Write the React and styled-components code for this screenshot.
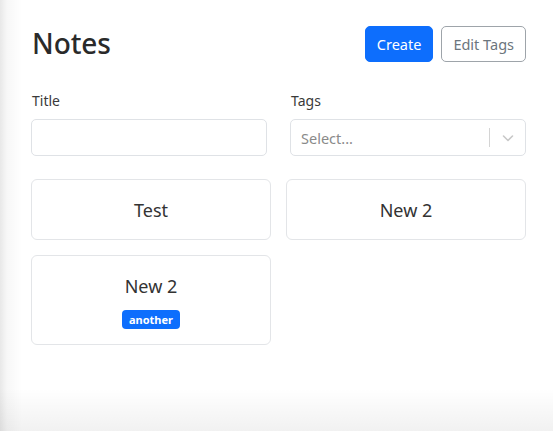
import React from "react";
import styled, { createGlobalStyle } from "styled-components";

const Global = createGlobalStyle`
  html, body { margin: 0; padding: 0; }
  body {
    font-family: "Noto Sans", "Open Sans", Arial, sans-serif;
    color: #212529;
    background: #fff;
  }
  * { box-sizing: border-box; }
`;

const Frame = styled.div`
  height: 100vh;
  overflow: hidden;
  background:
    linear-gradient(to bottom, rgba(0,0,0,0) 388px, rgba(0,0,0,0.055) 431px),
    linear-gradient(to right, rgba(0,0,0,0.09) 0, rgba(0,0,0,0.03) 7px, rgba(0,0,0,0) 22px),
    #fff;
`;

const Container = styled.div`
  width: 495px;
  margin-left: 31px;
  padding-top: 26px;
`;

const Header = styled.div`
  display: flex;
  align-items: center;
  justify-content: space-between;
  height: 36px;
`;

const Heading = styled.h1`
  margin: 0 0 2px;
  font-size: 28px;
  font-weight: 500;
  letter-spacing: -0.1px;
  line-height: 1;
  color: #2a2a2a;
  padding-left: 1px;
`;

const Actions = styled.div`
  display: flex;
  gap: 8px;
`;

const Button = styled.button`
  height: 36px;
  padding: 0 11px;
  border-radius: 5px;
  font-family: inherit;
  font-size: 14.5px;
  cursor: pointer;
  border: 1px solid ${(p) => (p.$primary ? "#0d6efd" : "#9ea4aa")};
  background: ${(p) => (p.$primary ? "#0d6efd" : "#fff")};
  color: ${(p) => (p.$primary ? "#fff" : "#6c757d")};
`;

const FormRow = styled.div`
  display: grid;
  grid-template-columns: 236px 236px;
  column-gap: 23px;
  margin-top: 28px;
`;

const Field = styled.div`
  display: flex;
  flex-direction: column;
`;

const Label = styled.label`
  font-size: 14px;
  line-height: 21px;
  color: #3a3a3a;
  margin-bottom: 8px;
  padding-left: 1px;
`;

const Input = styled.input`
  height: 37px;
  border: 1px solid #dfe2e6;
  border-radius: 5px;
  padding: 0 10px;
  font-family: inherit;
  font-size: 14.5px;
  outline: none;
`;

const Select = styled.div`
  height: 37px;
  border: 1px solid #dfe2e6;
  border-radius: 5px;
  display: flex;
  align-items: center;
  padding-left: 10px;
`;

const Placeholder = styled.span`
  flex: 1;
  font-size: 14.5px;
  color: #8a8a8a;
`;

const Separator = styled.span`
  width: 1px;
  height: 19px;
  background: #d4d4d4;
`;

const Indicator = styled.span`
  width: 35px;
  display: flex;
  justify-content: center;
  align-items: center;
  color: #c8c8c8;
`;

const Grid = styled.div`
  display: grid;
  grid-template-columns: 240px 240px;
  gap: 15px;
  margin-top: 23px;
`;

const Card = styled.div`
  border: 1px solid #e3e5e8;
  border-radius: 6px;
  padding: 17px 16px 15px;
  display: flex;
  flex-direction: column;
  align-items: center;
  justify-content: center;
  gap: 10px;
`;

const CardTitle = styled.span`
  font-size: 18px;
  line-height: 27px;
  color: #333;
`;

const Badges = styled.div`
  display: flex;
  gap: 4px;
`;

const Badge = styled.span`
  background: #0d6efd;
  color: #fff;
  font-weight: 700;
  font-size: 11px;
  line-height: 19px;
  height: 19px;
  padding: 0 7px;
  border-radius: 4px;
`;

const Chevron = () => (
  <svg width="14" height="14" viewBox="0 0 14 14" fill="none" stroke="currentColor" strokeWidth="1.6" strokeLinecap="round" strokeLinejoin="round">
    <polyline points="2.5,5 7,9.5 11.5,5" />
  </svg>
);

const notes = [
  { id: 1, title: "Test", tags: [] },
  { id: 2, title: "New 2", tags: [] },
  { id: 3, title: "New 2", tags: ["another"] },
];

export default function App() {
  return (
    <Frame>
      <Global />
      <Container>
        <Header>
          <Heading>Notes</Heading>
          <Actions>
            <Button $primary>Create</Button>
            <Button>Edit Tags</Button>
          </Actions>
        </Header>
        <FormRow>
          <Field>
            <Label>Title</Label>
            <Input type="text" />
          </Field>
          <Field>
            <Label>Tags</Label>
            <Select>
              <Placeholder>Select...</Placeholder>
              <Separator />
              <Indicator>
                <Chevron />
              </Indicator>
            </Select>
          </Field>
        </FormRow>
        <Grid>
          {notes.map((n) => (
            <Card key={n.id}>
              <CardTitle>{n.title}</CardTitle>
              {n.tags.length > 0 && (
                <Badges>
                  {n.tags.map((t) => (
                    <Badge key={t}>{t}</Badge>
                  ))}
                </Badges>
              )}
            </Card>
          ))}
        </Grid>
      </Container>
    </Frame>
  );
}
